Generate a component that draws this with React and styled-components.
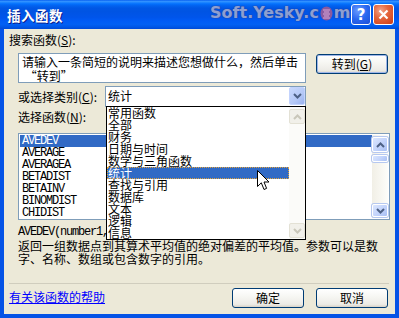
import React from "react";
import styled, { createGlobalStyle } from "styled-components";

const CJK = `"Noto Sans CJK SC", "Liberation Sans", sans-serif`;
const MONO = `"Liberation Mono", "Noto Sans CJK SC", monospace`;

const Global = createGlobalStyle`
  html, body { margin: 0; padding: 0; background: #fff; }
  body { font-family: ${CJK}; }
`;

const Window = styled.div`
  position: relative;
  width: 399px;
  height: 318px;
  display: flex;
  flex-direction: column;
  background: #0553e6;
  box-sizing: border-box;
  overflow: hidden;
  font-family: ${CJK};
  font-size: 12px;
  color: #000;
`;

const TitleBar = styled.div`
  flex: 0 0 29px;
  height: 29px;
  display: flex;
  align-items: center;
  padding: 0 5px 0 7px;
  box-sizing: border-box;
  background: linear-gradient(
    180deg,
    #0058ee 0%,
    #3593ff 4%,
    #288eff 7%,
    #127dff 10%,
    #036ffc 14%,
    #0262ee 20%,
    #0057e5 28%,
    #0054e3 40%,
    #0055eb 60%,
    #005bf5 72%,
    #0260f4 84%,
    #0058e8 92%,
    #004ad8 100%
  );
`;

const Title = styled.div`
  color: #fff;
  font-weight: 700;
  font-size: 13.5px;
  letter-spacing: 0.5px;
  text-shadow: 1px 1px 0 #0a1e8c;
  line-height: 16px;
`;

const Watermark = styled.div`
  position: absolute;
  left: 210px;
  top: 4px;
  display: flex;
  align-items: center;
  font-family: "DejaVu Sans", sans-serif;
  font-weight: 700;
  font-size: 16px;
  line-height: 18px;
  color: #8d9fd2;
  text-shadow: 0 0 1px #2a3f96, 0 0 1px #2a3f96;
  pointer-events: none;
  z-index: 2;
`;

const TitleButtons = styled.div`
  margin-left: auto;
  display: flex;
  gap: 2px;
`;

const CaptionButton = styled.div`
  width: ${(p) => p.$w}px;
  height: 21px;
  box-sizing: border-box;
  border: 1px solid #fff;
  border-radius: 3px;
  display: flex;
  align-items: center;
  justify-content: center;
  color: #fff;
  font-family: "DejaVu Sans", sans-serif;
  font-weight: 700;
  font-size: 15px;
  background: ${(p) =>
    p.$red
      ? "radial-gradient(circle at 35% 30%, #f3a58c 0%, #e5683f 40%, #cf3b14 100%)"
      : "radial-gradient(circle at 35% 30%, #6b9cff 0%, #2a67ef 50%, #1c4fd6 100%)"};
`;

const Content = styled.div`
  position: relative;
  flex: 1;
  margin: 0 4px 4px 4px;
  background: #ece9d8;
  display: flex;
  flex-direction: column;
  padding: 4px 5px 0 5px;
`;

const Label = styled.div`
  line-height: 14px;
  height: 14px;
  padding-left: ${(p) => p.$indent || 0}px;
  margin-top: ${(p) => p.$mt || 0}px;
  white-space: nowrap;
`;

const U = styled.span`
  text-decoration: underline;
`;

const SearchRow = styled.div`
  display: flex;
  align-items: flex-start;
  margin-top: 6px;
  padding-left: 9px;
`;

const SearchBox = styled.div`
  width: 288px;
  height: 30px;
  box-sizing: border-box;
  border: 1px solid #7f9db9;
  background: #fff;
  padding: 1px 3px;
  line-height: 14px;
  overflow: hidden;
  white-space: nowrap;
`;

const XPButton = styled.div`
  width: 72px;
  height: 20px;
  box-sizing: border-box;
  border: 1px solid #003c74;
  border-radius: 3px;
  background: linear-gradient(180deg, #ffffff 0%, #f6f6f2 45%, #ecebe6 85%, #d8d2c6 100%);
  box-shadow: ${(p) => (p.$default ? "inset 0 0 0 1px #9fb6e8" : "none")};
  display: flex;
  align-items: center;
  justify-content: center;
  line-height: 16px;
  margin-top: ${(p) => p.$mt || 0}px;
  margin-left: ${(p) => p.$ml || 0}px;
`;

const CategoryRow = styled.div`
  display: flex;
  align-items: center;
  margin-top: 3px;
  padding-left: 9px;
  height: 21px;
`;

const CatLabel = styled.div`
  width: 87px;
  line-height: 21px;
  white-space: nowrap;
`;

const Combo = styled.div`
  position: relative;
  width: 201px;
  height: 21px;
  box-sizing: border-box;
  border: 1px solid #7f9db9;
  background: #fff;
  display: flex;
  align-items: flex-start;
  z-index: 3;
`;

const ComboText = styled.div`
  flex: 1;
  padding-left: 2px;
  line-height: 18px;
`;

const ComboButton = styled.div`
  width: 16px;
  height: 18px;
  box-sizing: border-box;
  border: 1px solid #c3d3fd;
  border-radius: 2px;
  background: linear-gradient(135deg, #c9d9fd 0%, #b4c8f6 60%, #98b1ee 100%);
  display: flex;
  align-items: center;
  justify-content: center;
`;

const DropList = styled.div`
  position: absolute;
  top: 19px;
  left: 0;
  width: 200px;
  height: 134px;
  box-sizing: border-box;
  border: 1px solid #000;
  background: #fff;
  display: flex;
`;

const DropItems = styled.div`
  flex: 1;
  display: flex;
  flex-direction: column;
`;

const DropItem = styled.div`
  position: relative;
  height: 12px;
  line-height: 12px;
  font-size: 12px;
  padding-left: 1px;
  white-space: nowrap;
  background: ${(p) => (p.$sel ? "#316ac5" : "transparent")};
  color: ${(p) => (p.$sel ? "#fff" : "#000")};
  &::after {
    content: "";
    position: absolute;
    inset: 0;
    border: 1px dotted ${(p) => (p.$sel ? "#e0a23c" : "transparent")};
  }
`;

const ScrollBar = styled.div`
  width: 16px;
  display: flex;
  flex-direction: column;
  padding: ${(p) => p.$pad || 0}px 0;
  background: ${(p) =>
    p.$disabled ? "#fbfbf9" : "linear-gradient(90deg, #f1efe6 0%, #fdfdfa 100%)"};
`;

const ScrollButton = styled.div`
  height: ${(p) => p.$h || 15}px;
  box-sizing: border-box;
  border: 1px solid ${(p) => (p.$disabled ? "#e3e1d5" : "#fff")};
  border-radius: 2px;
  background: ${(p) =>
    p.$disabled
      ? "#f1f0ea"
      : "linear-gradient(135deg, #dbe6fe 0%, #c2d3fb 55%, #a9c0f3 100%)"};
  box-shadow: ${(p) => (p.$disabled ? "none" : "0 0 0 1px #b6c8f0")};
  display: flex;
  align-items: center;
  justify-content: center;
  margin-top: ${(p) => p.$mt || 0}px;
`;

const Spacer = styled.div`
  flex: 1;
`;

const ListBox = styled.div`
  margin-top: 9px;
  margin-left: 9px;
  width: 372px;
  height: 87px;
  box-sizing: border-box;
  border: 1px solid #7f9db9;
  background: #fff;
  padding: 1px;
  display: flex;
`;

const ListItems = styled.div`
  flex: 1;
  display: flex;
  flex-direction: column;
`;

const ListItem = styled.div`
  height: 12px;
  line-height: 12px;
  padding-left: 2px;
  font-family: ${MONO};
  font-size: 12px;
  letter-spacing: -1.2px;
  white-space: nowrap;
  background: ${(p) => (p.$sel ? "#316ac5" : "transparent")};
  color: ${(p) => (p.$sel ? "#fff" : "#000")};
`;

const Syntax = styled.div`
  margin-top: 6px;
  padding-left: 9px;
  line-height: 13px;
  font-family: ${MONO};
  font-size: 12px;
  letter-spacing: -1.2px;
  white-space: nowrap;
`;

const Desc = styled.div`
  padding-left: 9px;
  line-height: 13px;
  font-size: 12px;
  white-space: nowrap;
`;

const Separator = styled.div`
  margin-top: 18px;
  height: 1px;
  margin-right: 1px;
  background: #d0cdbe;
`;

const Footer = styled.div`
  margin-top: 4px;
  display: flex;
  align-items: flex-start;
  height: 20px;
`;

const HelpLink = styled.a`
  color: #0000ff;
  text-decoration: underline;
  line-height: 16px;
  margin-top: 1px;
  cursor: pointer;
`;

const FooterButtons = styled.div`
  margin-left: auto;
  margin-right: 2px;
  display: flex;
  gap: 12px;
`;

const Cursor = styled.svg`
  position: absolute;
  left: 150px;
  top: 63px;
  z-index: 5;
`;

const Chevron = ({ up, color = "#4d6185" }) => (
  <svg width="9" height="6" viewBox="0 0 9 6">
    <path
      d={up ? "M1 5 L4.5 1.5 L8 5" : "M1 1 L4.5 4.5 L8 1"}
      fill="none"
      stroke={color}
      strokeWidth="2"
    />
  </svg>
);

const categories = [
  "常用函数",
  "全部",
  "财务",
  "日期与时间",
  "数学与三角函数",
  "统计",
  "查找与引用",
  "数据库",
  "文本",
  "逻辑",
  "信息",
];

const functions = ["AVEDEV", "AVERAGE", "AVERAGEA", "BETADIST", "BETAINV", "BINOMDIST", "CHIDIST"];

export default function App() {
  return (
    <>
      <Global />
      <Window>
        <TitleBar>
          <Title>插入函数</Title>
          <TitleButtons>
            <CaptionButton $w={20}>?</CaptionButton>
            <CaptionButton $w={21} $red>
              <svg width="11" height="11" viewBox="0 0 11 11">
                <path d="M1.5 1.5 L9.5 9.5 M9.5 1.5 L1.5 9.5" stroke="#fff" strokeWidth="2.2" />
              </svg>
            </CaptionButton>
          </TitleButtons>
        </TitleBar>
        <Watermark>
          Soft.Yesky.c
          <svg width="13" height="15" viewBox="0 0 13 15" style={{ margin: "0 1px" }}>
            <ellipse cx="6.5" cy="7.5" rx="6" ry="7" fill="#8a5a9e" />
            <path d="M3 4 H10 M4 6 H9 M3 8 H10 M4 10 H9 M3 12 H10" stroke="#d9a8d8" strokeWidth="1" />
          </svg>
          m
        </Watermark>
        <Content>
          <Label>
            搜索函数(<U>S</U>):
          </Label>
          <SearchRow>
            <SearchBox>
              请输入一条简短的说明来描述您想做什么，然后单击
              <br />
              &nbsp;“转到”
            </SearchBox>
            <XPButton $default $ml={10} $mt={1}>
              转到(<U>G</U>)
            </XPButton>
          </SearchRow>
          <CategoryRow>
            <CatLabel>
              或选择类别(<U>C</U>):
            </CatLabel>
            <Combo>
              <ComboText>统计</ComboText>
              <ComboButton>
                <Chevron />
              </ComboButton>
              <DropList>
                <DropItems>
                  {categories.map((c) => (
                    <DropItem key={c} $sel={c === "统计"}>
                      {c}
                    </DropItem>
                  ))}
                </DropItems>
                <ScrollBar $disabled $pad={1}>
                  <ScrollButton $disabled $mt={1}>
                    <Chevron up color="#c9c7ba" />
                  </ScrollButton>
                  <Spacer />
                  <ScrollButton $disabled>
                    <Chevron color="#c9c7ba" />
                  </ScrollButton>
                </ScrollBar>
                <Cursor width="13" height="21" viewBox="0 0 13 21">
                  <path
                    d="M0.5 0.5 L0.5 16.5 L4.3 12.8 L7 19.5 L9.6 18.4 L7 12 L12 12 Z"
                    fill="#fff"
                    stroke="#000"
                    strokeWidth="1"
                  />
                </Cursor>
              </DropList>
            </Combo>
          </CategoryRow>
          <Label $indent={9} $mt={3}>
            选择函数(<U>N</U>):
          </Label>
          <ListBox>
            <ListItems>
              {functions.map((f, i) => (
                <ListItem key={f} $sel={i === 0}>
                  {f}
                </ListItem>
              ))}
            </ListItems>
            <ScrollBar $pad={1}>
              <ScrollButton $mt={1}>
                <Chevron up />
              </ScrollButton>
              <ScrollButton $h={7} $mt={3} />
              <Spacer />
              <ScrollButton $h={13}>
                <Chevron />
              </ScrollButton>
            </ScrollBar>
          </ListBox>
          <Syntax>AVEDEV(number1,number2,...)</Syntax>
          <Desc>
            返回一组数据点到其算术平均值的绝对偏差的平均值。参数可以是数
            <br />
            字、名称、数组或包含数字的引用。
          </Desc>
          <Separator />
          <Footer>
            <HelpLink>有关该函数的帮助</HelpLink>
            <FooterButtons>
              <XPButton>确定</XPButton>
              <XPButton>取消</XPButton>
            </FooterButtons>
          </Footer>
        </Content>
      </Window>
    </>
  );
}
